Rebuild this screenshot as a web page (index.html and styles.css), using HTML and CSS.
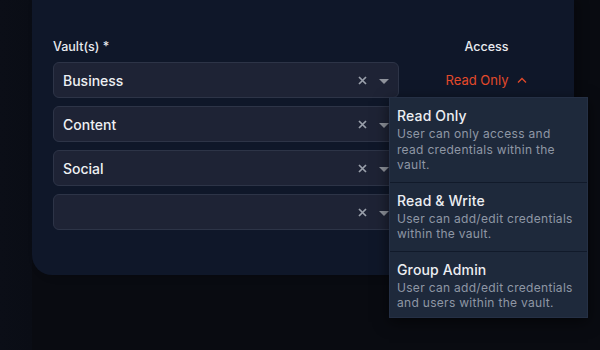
FILE: index.html
```html
<!DOCTYPE html>
<html>
<head>
<meta charset="utf-8">
<link rel="stylesheet" href="styles.css">
</head>
<body>
<div class="page">
  <div class="panel">
    <div class="grid">
      <div class="label">Vault(s) *</div>
      <div class="label center">Access</div>

      <div class="select"><span class="value">Business</span><span class="icons"><svg class="clear" width="9" height="9" viewBox="0 0 9 9"><path d="M1 1L8 8M8 1L1 8"/></svg><svg class="drop" width="10" height="5" viewBox="0 0 10 5"><path d="M0 0H10L5 5Z"/></svg></span></div>
      <div class="access">
        <span class="access-btn">Read Only <svg class="up" width="10" height="6" viewBox="0 0 10 6"><path d="M1 5.5L5 1.5L9 5.5"/></svg></span>
        <div class="menu">
          <div class="item">
            <div class="title">Read Only</div>
            <div class="desc">User can only access and<br>read credentials within the<br>vault.</div>
          </div>
          <div class="item">
            <div class="title">Read &amp; Write</div>
            <div class="desc">User can add/edit credentials<br>within the vault.</div>
          </div>
          <div class="item last">
            <div class="title">Group Admin</div>
            <div class="desc">User can add/edit credentials<br>and users within the vault.</div>
          </div>
        </div>
      </div>

      <div class="select"><span class="value">Content</span><span class="icons"><svg class="clear" width="9" height="9" viewBox="0 0 9 9"><path d="M1 1L8 8M8 1L1 8"/></svg><svg class="drop" width="10" height="5" viewBox="0 0 10 5"><path d="M0 0H10L5 5Z"/></svg></span></div>
      <div></div>

      <div class="select"><span class="value">Social</span><span class="icons"><svg class="clear" width="9" height="9" viewBox="0 0 9 9"><path d="M1 1L8 8M8 1L1 8"/></svg><svg class="drop" width="10" height="5" viewBox="0 0 10 5"><path d="M0 0H10L5 5Z"/></svg></span></div>
      <div></div>

      <div class="select"><span class="value"></span><span class="icons"><svg class="clear" width="9" height="9" viewBox="0 0 9 9"><path d="M1 1L8 8M8 1L1 8"/></svg><svg class="drop" width="10" height="5" viewBox="0 0 10 5"><path d="M0 0H10L5 5Z"/></svg></span></div>
      <div></div>
    </div>
  </div>
</div>
</body>
</html>
```

FILE: styles.css
```css
html, body {
  margin: 0;
  padding: 0;
}
body {
  width: 600px;
  height: 350px;
  overflow: hidden;
  background: #090b11;
  font-family: Inter, "Open Sans", sans-serif;
}
.page {
  height: 350px;
  background: linear-gradient(90deg, #0b0e17 0px, #0a0d15 32px, #090b11 32px);
}
.panel {
  margin-left: 32px;
  width: 542px;
  box-sizing: border-box;
  background: #0f1729;
  border-radius: 0 0 20px 20px;
  padding: 37px 0 45px 21px;
  box-shadow: 6px 0 10px rgba(0,0,0,0.25);
}
.grid {
  display: grid;
  grid-template-columns: 346px 175px;
  grid-auto-rows: 36px;
  grid-template-rows: 17px;
  row-gap: 8px;
}
.label {
  font-size: 12.5px;
  font-weight: 500;
  color: #e8eaee;
  line-height: 19px;
}
.label.center {
  text-align: center;
}
.select {
  box-sizing: border-box;
  display: flex;
  align-items: center;
  justify-content: space-between;
  background: #1e2335;
  border: 1px solid #2d3447;
  border-radius: 6px;
  padding: 0 9px 0 9px;
}
.value {
  font-size: 14px;
  font-weight: 500;
  color: #eef0f3;
}
.icons {
  display: flex;
  align-items: center;
  gap: 12px;
}
.clear path {
  stroke: #9aa0ab;
  stroke-width: 1.7;
  fill: none;
}
.drop {
  margin-top: 2px;
}
.drop path {
  fill: #8e929b;
}
.access {
  position: relative;
  display: flex;
  align-items: center;
  justify-content: center;
}
.access-btn {
  display: flex;
  align-items: center;
  gap: 9px;
  font-size: 13px;
  color: #e34a2b;
}
.up path {
  stroke: #e34a2b;
  stroke-width: 1.3;
  fill: none;
}
.menu {
  position: absolute;
  top: calc(100% - 1px);
  left: -10px;
  width: 199px;
  box-sizing: border-box;
  background: #1e293b;
  border: 1px solid #253045;
  box-shadow: 0 4px 14px rgba(0,0,0,0.55);
  z-index: 2;
}
.item {
  padding: 9px 7px 9px 7px;
  border-bottom: 1px solid #111a2a;
}
.item.last {
  border-bottom: none;
  padding-bottom: 6px;
}
.title {
  font-size: 14px;
  font-weight: 500;
  line-height: 18px;
  color: #eceef2;
  letter-spacing: 0.15px;
}
.desc {
  margin-top: 1px;
  font-size: 12px;
  letter-spacing: 0.3px;
  line-height: 15.5px;
  color: #8f97a5;
  white-space: nowrap;
}
```
